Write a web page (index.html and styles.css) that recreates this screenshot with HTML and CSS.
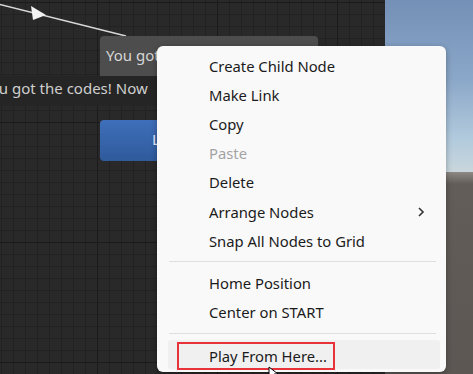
FILE: index.html
```html
<!DOCTYPE html>
<html lang="en">
<head>
    <meta charset="UTF-8">
    <title>Dialogue Graph — context menu</title>
    <link rel="stylesheet" href="styles.css">
</head>
<body>

    <!-- Граф диалога -->
    <div class="graph">
        <svg class="wire" width="385" height="374" viewBox="0 0 385 374">
            <line x1="-2" y1="4" x2="126" y2="36" stroke="#d8d8d8" stroke-width="1.6"/>
            <path d="M31 6 L46 15 L33 20 Z" fill="#f2f2f2"/>
        </svg>

        <div class="node-title">You got the codes!</div>
        <div class="node-text">You got the codes! Now</div>
        <div class="node-button">Leave</div>
    </div>

    <!-- Сцена справа -->
    <div class="scene">
        <div class="sky"></div>
        <div class="ground"></div>
    </div>

    <!-- Контекстное меню -->
    <div class="menu">
        <div class="item">Create Child Node</div>
        <div class="item">Make Link</div>
        <div class="item">Copy</div>
        <div class="item disabled">Paste</div>
        <div class="item">Delete</div>
        <div class="item">Arrange Nodes
            <svg class="chevron" width="8" height="12" viewBox="0 0 8 12">
                <path d="M2 2 L6 6 L2 10" fill="none" stroke="#333" stroke-width="1.6"/>
            </svg>
        </div>
        <div class="item">Snap All Nodes to Grid</div>
        <div class="sep"></div>
        <div class="item">Home Position</div>
        <div class="item">Center on START</div>
        <div class="sep"></div>
        <div class="item active"><span class="mark">Play From Here...</span></div>
    </div>

    <svg class="cursor" width="12" height="14" viewBox="0 0 12 14">
        <path d="M1 1 L1 12 L4 9 L6 13 L8 12 L6 8 L10 8 Z" fill="#fff" stroke="#000" stroke-width="1"/>
    </svg>

</body>
</html>
```

FILE: styles.css
```css
* {
    box-sizing: border-box;
    margin: 0;
    padding: 0;
}

body {
    width: 473px;
    height: 374px;
    overflow: hidden;
    display: flex;
    position: relative;
    font-family: 'Noto Sans', 'Open Sans', sans-serif;
    background: #262626;
}

/* Граф */
.graph {
    flex: 0 0 385px;
    position: relative;
    background-color: #292929;
    background-image:
        linear-gradient(#1b1b1b 1px, transparent 1px),
        linear-gradient(90deg, #1b1b1b 1px, transparent 1px),
        linear-gradient(#222 1px, transparent 1px),
        linear-gradient(90deg, #222 1px, transparent 1px);
    background-size: 120px 120px, 120px 120px, 12px 12px, 12px 12px;
    background-position: 0 2px, 97px 0, 0 2px, 1px 0;
    overflow: hidden;
}

.wire {
    position: absolute;
    left: 0;
    top: 0;
}

.node-title {
    position: absolute;
    left: 100px;
    top: 36px;
    width: 218px;
    height: 40px;
    padding: 9px 6px;
    background: #4d4d4d;
    border-radius: 4px 4px 0 0;
    color: #d6d6d6;
    font-size: 15px;
    white-space: nowrap;
    overflow: hidden;
}

.node-text {
    position: absolute;
    left: -18px;
    top: 76px;
    width: 200px;
    height: 30px;
    padding-top: 2px;
    background: #252525;
    color: #cfcfcf;
    font-size: 15px;
    white-space: nowrap;
}

.node-button {
    position: absolute;
    left: 100px;
    top: 120px;
    width: 110px;
    height: 41px;
    padding: 9px 0 0 52px;
    background: linear-gradient(#3f6fba, #2f5a9c);
    border-radius: 4px;
    color: #e6eefa;
    font-size: 15px;
}

/* Сцена */
.scene {
    flex: 1;
    display: flex;
    flex-direction: column;
}

.sky {
    flex: 0 0 172px;
    background: linear-gradient(#7590b6 0%, #8aa6c8 45%, #b3cbdd 82%, #c9d6dc 100%);
}

.ground {
    flex: 1;
    background: linear-gradient(#8d8985 0px, #625d59 12px, #5c5753 100%);
}

/* Меню */
.menu {
    position: absolute;
    left: 157px;
    top: 46px;
    width: 289px;
    height: 326px;
    padding: 5px 6px 3px 11px;
    background: #f9f9f9;
    border-radius: 6px;
    box-shadow: 0 2px 6px rgba(0, 0, 0, 0.3);
    display: flex;
    flex-direction: column;
}

.item {
    height: 29.2px;
    display: flex;
    align-items: center;
    padding-left: 41px;
    font-size: 14.8px;
    color: #1b1b1b;
    position: relative;
}

.item.disabled {
    color: #a3a3a3;
}

.item.active {
    background: #f0f0f0;
    border-radius: 3px;
}

.mark {
    position: absolute;
    left: 9px;
    top: 2px;
    height: 28px;
    padding: 0 0 0 30px;
    display: flex;
    align-items: center;
    width: 158px;
    border: 2px solid #e8323a;
}

.chevron {
    position: absolute;
    right: 15px;
    top: 9px;
}

.sep {
    height: 13px;
    display: flex;
    align-items: center;
    padding: 0 4px 0 1px;
}

.sep::after {
    content: "";
    flex: 1;
    height: 1px;
    background: #dedede;
}

.cursor {
    position: absolute;
    left: 268px;
    top: 366px;
}
```
